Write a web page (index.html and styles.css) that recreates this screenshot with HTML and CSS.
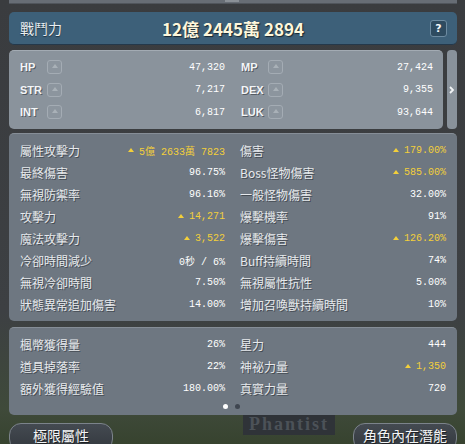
FILE: index.html
```html
<!DOCTYPE html>
<html lang="zh-Hant">
<head>
  <meta charset="UTF-8">
  <title>角色能力值</title>
  <link rel="stylesheet" href="styles.css">
</head>
<body>
  <div id="bg-name">Phantist</div>
  <div id="wrap">
    <div class="topstrip"><span class="nub"></span></div>

    <div class="header">
      <span class="title">戰鬥力</span>
      <span class="power">12億 2445萬 2894</span>
      <span class="help">?</span>
    </div>

    <div class="basic">
      <div class="panel light stat-grid narrow">
        <div class="row"><span class="ab">HP</span><span class="up"></span><span class="val">47,320</span></div>
        <div class="row"><span class="ab">MP</span><span class="up"></span><span class="val">27,424</span></div>
        <div class="row"><span class="ab">STR</span><span class="up"></span><span class="val">7,217</span></div>
        <div class="row"><span class="ab">DEX</span><span class="up"></span><span class="val">9,355</span></div>
        <div class="row"><span class="ab">INT</span><span class="up"></span><span class="val">6,817</span></div>
        <div class="row"><span class="ab">LUK</span><span class="up"></span><span class="val">93,644</span></div>
      </div>
      <div class="tab">
        <svg width="6" height="8" viewBox="0 0 6 8"><path d="M1 1 L4 4 L1 7" fill="none" stroke="#f2f4f6" stroke-width="1.8"/></svg>
      </div>
    </div>

    <div class="panel dark stat-grid" id="detail">
      <div class="row"><span class="lb">屬性攻擊力</span><span class="val gold"><i class="tri"></i>5億 2633萬 7823</span></div>
      <div class="row"><span class="lb">傷害</span><span class="val gold"><i class="tri"></i>179.00%</span></div>
      <div class="row"><span class="lb">最終傷害</span><span class="val">96.75%</span></div>
      <div class="row"><span class="lb">Boss怪物傷害</span><span class="val gold"><i class="tri"></i>585.00%</span></div>
      <div class="row"><span class="lb">無視防禦率</span><span class="val">96.16%</span></div>
      <div class="row"><span class="lb">一般怪物傷害</span><span class="val">32.00%</span></div>
      <div class="row"><span class="lb">攻擊力</span><span class="val gold"><i class="tri"></i>14,271</span></div>
      <div class="row"><span class="lb">爆擊機率</span><span class="val">91%</span></div>
      <div class="row"><span class="lb">魔法攻擊力</span><span class="val gold"><i class="tri"></i>3,522</span></div>
      <div class="row"><span class="lb">爆擊傷害</span><span class="val gold"><i class="tri"></i>126.20%</span></div>
      <div class="row"><span class="lb">冷卻時間減少</span><span class="val">0秒 / 6%</span></div>
      <div class="row"><span class="lb">Buff持續時間</span><span class="val">74%</span></div>
      <div class="row"><span class="lb">無視冷卻時間</span><span class="val">7.50%</span></div>
      <div class="row"><span class="lb">無視屬性抗性</span><span class="val">5.00%</span></div>
      <div class="row"><span class="lb">狀態異常追加傷害</span><span class="val">14.00%</span></div>
      <div class="row"><span class="lb">增加召喚獸持續時間</span><span class="val">10%</span></div>
    </div>

    <div class="panel dark" id="extra">
      <div class="stat-grid">
        <div class="row"><span class="lb">楓幣獲得量</span><span class="val">26%</span></div>
        <div class="row"><span class="lb">星力</span><span class="val">444</span></div>
        <div class="row"><span class="lb">道具掉落率</span><span class="val">22%</span></div>
        <div class="row"><span class="lb">神祕力量</span><span class="val gold"><i class="tri"></i>1,350</span></div>
        <div class="row"><span class="lb">額外獲得經驗值</span><span class="val">180.00%</span></div>
        <div class="row"><span class="lb">真實力量</span><span class="val">720</span></div>
      </div>
      <div class="dots"><span class="dot on"></span><span class="dot"></span></div>
    </div>

    <div class="buttons">
      <span class="btn">極限屬性</span>
      <span class="btn">角色內在潛能</span>
    </div>
  </div>
</body>
</html>
```

FILE: styles.css
```css
body {
  margin: 0;
  width: 465px;
  height: 444px;
  overflow: hidden;
  position: relative;
  font-family: "Noto Sans CJK TC", "Noto Sans", sans-serif;
  background: linear-gradient(180deg, #3a3c3f 0%, #3d4043 70%, #3f4a3a 92%, #37432f 100%);
  color: #eef1f4;
}
#bg-name {
  position: absolute;
  left: 243px;
  top: 414px;
  padding: 0 6px;
  background: #2f3338;
  color: #4c5258;
  font-family: "Liberation Serif", serif;
  font-weight: bold;
  font-size: 18px;
  letter-spacing: 2px;
}
#wrap {
  position: relative;
  padding: 0 8px 0 9px;
}
.topstrip {
  height: 4px;
  background: #676d75;
  border-bottom: 1px solid #50555c;
  box-sizing: border-box;
  position: relative;
}
.topstrip .nub {
  position: absolute;
  left: 216px;
  top: 0;
  width: 14px;
  height: 2px;
  background: #8a9097;
}
.header {
  margin-top: 8px;
  height: 33px;
  background: #3d6079;
  border-radius: 5px;
  border-bottom: 1px solid #24384a;
  box-sizing: border-box;
  display: flex;
  align-items: center;
  position: relative;
  padding: 0 10px 0 11px;
}
.title {
  font-size: 14px;
  color: #e9eef2;
  text-shadow: 0 1px 1px rgba(0,0,0,0.5);
}
.power {
  position: absolute;
  left: 0;
  right: 0;
  text-align: center;
  font-size: 17px;
  font-weight: bold;
  color: #fdf7dc;
  text-shadow: 1px 1px 1px rgba(0,0,0,0.6);
  pointer-events: none;
}
.help {
  margin-left: auto;
  width: 17px;
  height: 17px;
  box-sizing: border-box;
  border: 1px solid #6d8ba1;
  border-radius: 3px;
  background: #2e4b60;
  font-family: "DejaVu Sans", sans-serif;
  font-weight: bold;
  font-size: 11px;
  line-height: 15px;
  text-align: center;
  color: #f4f6f8;
}
.basic {
  margin-top: 5px;
  display: flex;
  gap: 4px;
  height: 79px;
}
.panel {
  border-radius: 5px;
  box-sizing: border-box;
}
.light {
  flex: 1;
  background: #8a939c;
  border-top: 1px solid #a3abb3;
  padding: 5px 10px 6px 11px;
}
.dark {
  background: #6e7781;
  border-top: 1px solid #868e97;
}
.tab {
  width: 10px;
  background: #89929b;
  border-radius: 4px;
  display: flex;
  align-items: center;
  justify-content: center;
}
.stat-grid {
  display: grid;
  grid-template-columns: 205px 1fr;
  column-gap: 15px;
}
.stat-grid.narrow {
  column-gap: 16px;
  grid-auto-rows: 22.5px;
}
.row {
  display: flex;
  align-items: center;
  height: 22px;
  white-space: nowrap;
}
.narrow .row {
  height: 22.5px;
}
.ab {
  font-family: "Liberation Sans", sans-serif;
  font-weight: bold;
  font-size: 11px;
  width: 27px;
  color: #f3f5f7;
  text-shadow: 1px 1px 0 rgba(60,66,74,0.7);
}
.up {
  width: 15px;
  height: 14px;
  box-sizing: border-box;
  border: 1px solid #a4acb4;
  border-radius: 3px;
  background: #8c959e;
  position: relative;
}
.up::after {
  content: "";
  position: absolute;
  left: 4px;
  top: 3px;
  width: 0;
  height: 0;
  border-left: 3px solid transparent;
  border-right: 3px solid transparent;
  border-bottom: 4px solid #a9b1b8;
}
.lb {
  font-size: 12px;
  color: #e7eaed;
  text-shadow: 1px 1px 0 rgba(40,45,52,0.6);
}
.val {
  margin-left: auto;
  font-family: "Liberation Mono", "Noto Sans CJK TC", monospace;
  font-size: 10px;
  color: #ffffff;
  display: flex;
  align-items: center;
}
.val.gold {
  color: #f3cf3a;
}
.tri {
  width: 0;
  height: 0;
  border-left: 3px solid transparent;
  border-right: 3px solid transparent;
  border-bottom: 4px solid #f3cf3a;
  margin-right: 5px;
}
#detail {
  margin-top: 4px;
  padding: 5px 11px 6px 11px;
}
#extra {
  margin-top: 6px;
  padding: 5px 11px 2px 11px;
  height: 88px;
}
.dots {
  display: flex;
  justify-content: center;
  gap: 7px;
  padding-top: 5px;
  padding-right: 3px;
}
.dot {
  width: 5px;
  height: 5px;
  border-radius: 50%;
  background: #3f4650;
}
.dot.on {
  background: #ffffff;
}
.buttons {
  margin-top: 8px;
  display: flex;
  justify-content: space-between;
}
.btn {
  width: 104px;
  height: 28px;
  box-sizing: border-box;
  border: 1px solid #7c838b;
  border-radius: 12px;
  background: linear-gradient(180deg, #444a51, #33383e);
  color: #f2f4f6;
  font-size: 14px;
  text-align: center;
  line-height: 22px;
  text-shadow: 1px 1px 0 rgba(0,0,0,0.5);
}
```
